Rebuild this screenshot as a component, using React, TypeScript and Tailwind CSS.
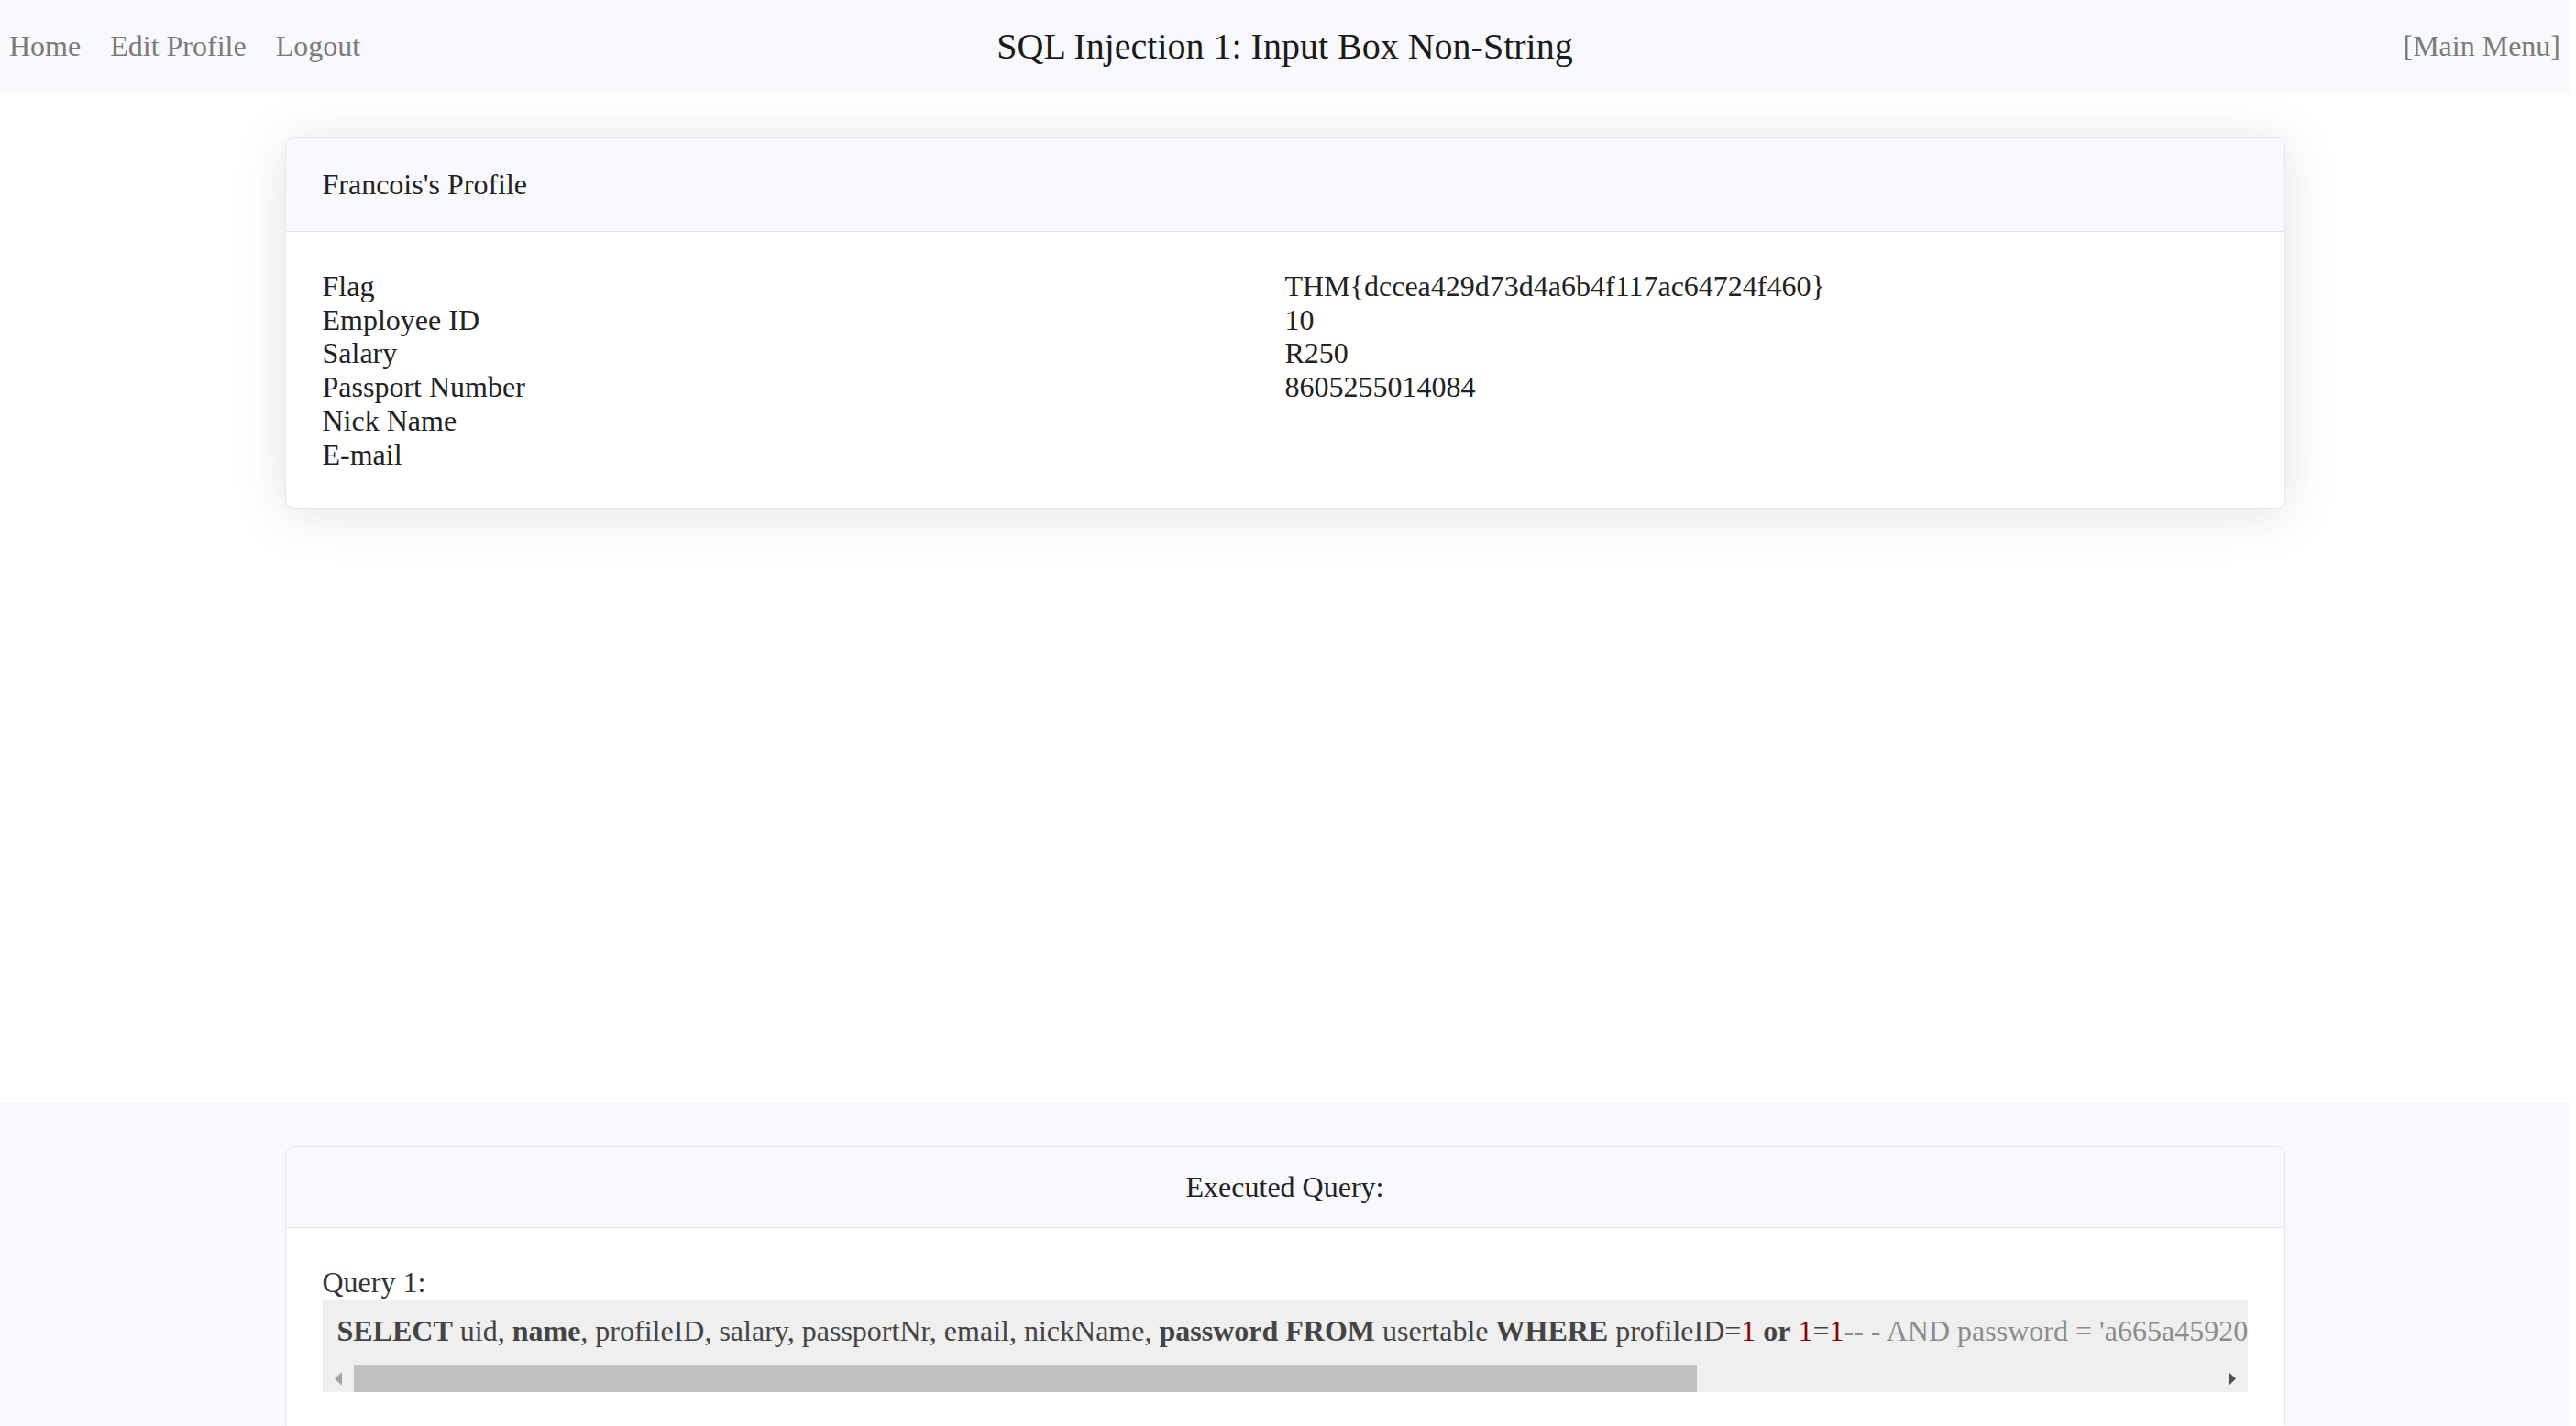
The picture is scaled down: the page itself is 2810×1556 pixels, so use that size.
const PROFILE = [
  { label: "Flag", value: "THM{dccea429d73d4a6b4f117ac64724f460}" },
  { label: "Employee ID", value: "10" },
  { label: "Salary", value: "R250" },
  { label: "Passport Number", value: "8605255014084" },
  { label: "Nick Name", value: "" },
  { label: "E-mail", value: "" },
];

function Kw({ children }: { children: React.ReactNode }) {
  return <b className="font-bold text-[#444]">{children}</b>;
}

function Num({ children }: { children: React.ReactNode }) {
  return <span className="text-[#880000]">{children}</span>;
}

function Header() {
  return (
    <header className="grid h-[101px] grid-cols-[1fr_auto_1fr] items-center bg-[#f8f9fc] px-[10px]">
      <nav className="flex items-center gap-[32px] text-[32px] leading-[1.15] text-[#7a7a7a]">
        <a href="#">Home</a>
        <a href="#">Edit Profile</a>
        <a href="#">Logout</a>
      </nav>
      <h1 className="text-[40px] leading-[1.15] text-[#1a1a1a]">
        SQL Injection 1: Input Box Non-String
      </h1>
      <div className="flex justify-end text-[32px] leading-[1.15] text-[#7a7a7a]">
        <a href="#">[Main Menu]</a>
      </div>
    </header>
  );
}

function ProfileCard() {
  return (
    <section className="mx-auto w-[2182px] rounded-[10px] border border-[#e3e6f0] bg-white shadow-[0_5px_56px_0_rgba(58,59,69,0.15)]">
      <div className="rounded-t-[10px] border-b border-[#e3e6f0] bg-[#f8f9fc] px-[40px] pt-[32px] pb-[32px]">
        <p>Francois's Profile</p>
      </div>
      <div className="grid grid-cols-2 px-[40px] pt-[41px] pb-[39px]">
        <div>
          {PROFILE.map((row) => (
            <p key={row.label}>{row.label}</p>
          ))}
        </div>
        <div>
          {PROFILE.filter((row) => row.value).map((row) => (
            <p key={row.label}>{row.value}</p>
          ))}
        </div>
      </div>
    </section>
  );
}

function QueryScrollbar() {
  return (
    <div className="mb-[2px] flex h-[30px] items-stretch">
      <div className="flex w-[34px] items-center justify-start pl-[13px]">
        <svg width="8" height="15" viewBox="0 0 8 15">
          <polygon points="8,0 8,15 0,7.5" fill="#a3a3a3" />
        </svg>
      </div>
      <div className="w-[1465px] bg-[#c1c1c1]" />
      <div className="flex-1" />
      <div className="flex w-[30px] items-center justify-start pl-[9px]">
        <svg width="8" height="15" viewBox="0 0 8 15">
          <polygon points="0,0 8,7.5 0,15" fill="#505050" />
        </svg>
      </div>
    </div>
  );
}

function QueryCard() {
  return (
    <section className="mx-auto w-[2182px] rounded-[10px] border border-[#e3e6f0] bg-white">
      <div className="rounded-t-[10px] border-b border-[#e3e6f0] bg-[#f8f9fc] py-[25px] text-center">
        <p>Executed Query:</p>
      </div>
      <div className="px-[40px] pt-[41px] pb-[40px]">
        <p className="text-[#333]">Query 1:</p>
        <div className="mt-[1px] bg-[#efefef]">
          <div className="overflow-hidden whitespace-nowrap pt-[15px] pb-[19px] pl-[16px] text-[#444]">
            <Kw>SELECT</Kw> uid, <Kw>name</Kw>, profileID, salary, passportNr,
            email, nickName, <Kw>password</Kw> <Kw>FROM</Kw> usertable{" "}
            <Kw>WHERE</Kw> profileID=<Num>1</Num> <Kw>or</Kw> <Num>1</Num>=
            <Num>1</Num>
            <span className="text-[#8c8c8c]">
              -- - AND password = 'a665a45920422f9d417e4867efdc4fb8a04a1f3fff1fa07e998e86f7f7a27ae3'
            </span>
          </div>
          <QueryScrollbar />
        </div>
      </div>
    </section>
  );
}

export default function App() {
  return (
    <div className="w-[2803px] font-['Liberation_Serif','Times_New_Roman',serif] text-[32px] leading-[1.15] text-[#222]">
      <Header />
      <main className="h-[1102px] bg-white pt-[49px]">
        <ProfileCard />
      </main>
      <div className="bg-[#f8f9fc] pt-[48px] pb-[48px]">
        <QueryCard />
      </div>
    </div>
  );
}
